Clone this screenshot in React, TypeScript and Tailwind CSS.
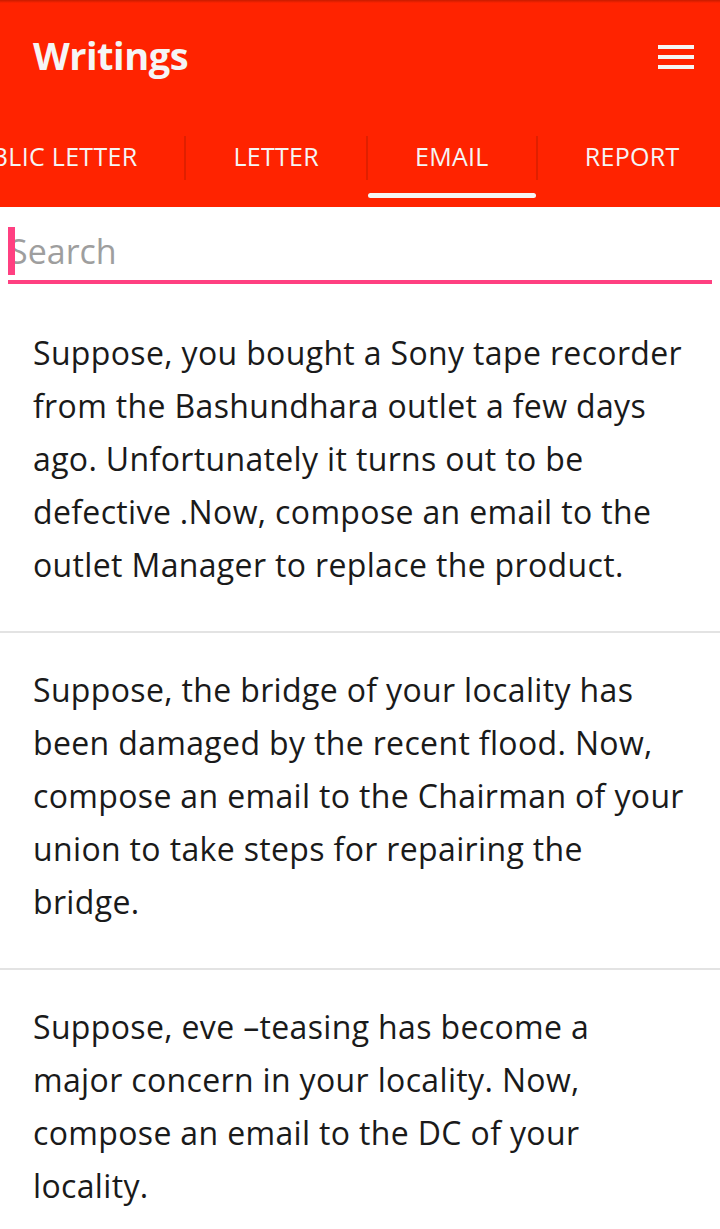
import { useState } from "react";

const tabs = ["Public Letter", "Letter", "Email", "Report"];

const items = [
  "Suppose, you bought a Sony tape recorder from the Bashundhara outlet a few days ago. Unfortunately it turns out to be defective .Now, compose an email to the outlet Manager to replace the product.",
  "Suppose, the bridge of your locality has been damaged by the recent flood. Now, compose an email to the Chairman of your union to take steps for repairing the bridge.",
  "Suppose, eve \u2013teasing has become a major concern in your locality. Now, compose an email to the DC of your locality.",
];

export default function App() {
  const [query, setQuery] = useState("");
  const active = 2;

  return (
    <div className="w-[720px] min-h-screen bg-white font-['Open_Sans',sans-serif] overflow-hidden">
      <header className="bg-[#ff2300] relative">
        <div className="h-[3px] bg-gradient-to-b from-[#c81c00] to-[#ff2300]" />
        <div className="h-[107px] flex items-center justify-between pl-[33px] pr-[26px]">
          <h1 className="text-[38px] font-bold text-[#f5f5f5] tracking-[-0.5px] leading-none pb-[4px]">
            Writings
          </h1>
          <button className="flex flex-col gap-[6px] w-[36px]">
            <span className="h-[4px] bg-[#f5f5f5]" />
            <span className="h-[4px] bg-[#f5f5f5]" />
            <span className="h-[4px] bg-[#f5f5f5]" />
          </button>
        </div>
        <div className="h-[97px] flex items-center ml-[-89px] whitespace-nowrap">
          {tabs.map((t, i) => (
            <div key={t} className="flex items-center h-full">
              {i > 0 && <span className="w-[2px] h-[44px] bg-[#e01f00] mb-[2px]" />}
              <div className="relative h-full flex items-center px-[47px]">
                <span className="text-[25px] tracking-[0.3px] uppercase text-[#f5f5f5] mb-[4px]">{t}</span>
                {i === active && (
                  <span className="absolute left-0 right-0 bottom-[9px] h-[5px] rounded-full bg-[#f5f5f5]" />
                )}
              </div>
            </div>
          ))}
        </div>
      </header>

      <div className="pt-[20px] px-[8px] pb-[12px]">
        <div className="relative h-[48px] flex items-center">
          <span className="absolute left-0 top-0 w-[7px] h-[48px] bg-[#ff4081]" />
          <input
            value={query}
            onChange={(e) => setQuery(e.target.value)}
            placeholder="Search"
            className="w-full pl-[1px] text-[34px] text-[#222] placeholder:text-[#9e9e9e] outline-none bg-transparent"
          />
        </div>
        <div className="mt-[5px] h-[4px] bg-[#ff4081]" />
      </div>

      <ul>
        {items.map((text, i) => (
          <li
            key={i}
            className={
              "pl-[33px] pr-[35px] pt-[30px] pb-[40px] text-[32px] tracking-[0.35px] leading-[53px] text-[#1a1a1a] " +
              (i < items.length - 1 ? "border-b-2 border-[#e3e3e3]" : "")
            }
          >
            {text}
          </li>
        ))}
      </ul>
    </div>
  );
}
